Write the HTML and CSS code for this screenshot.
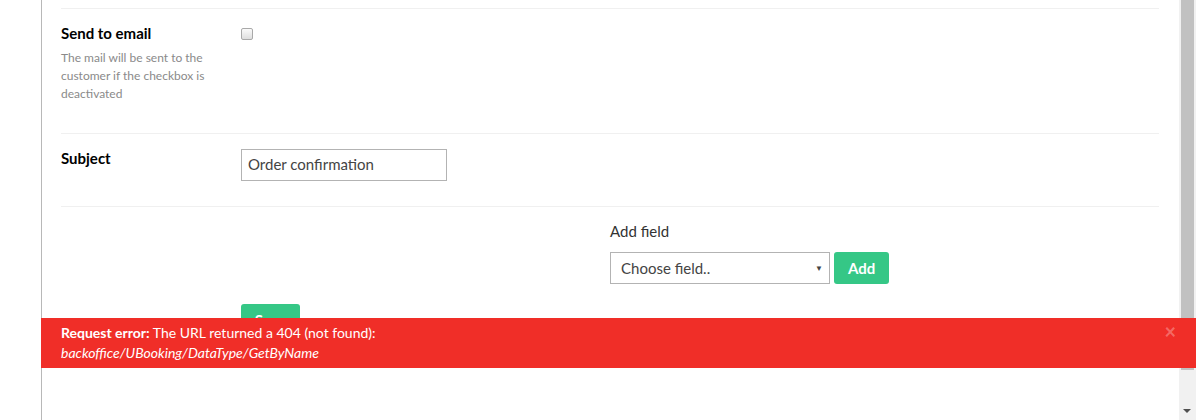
FILE: index.html
```html
<!DOCTYPE html>
<html lang="en">
<head>
    <meta charset="UTF-8">
    <meta name="viewport" content="width=device-width, initial-scale=1.0">
    <title>Email settings</title>
    <link rel="stylesheet" href="styles.css">
</head>
<body>

    <div class="shell">
        <div class="gutter"></div>

        <!-- Editor panel -->
        <div class="editor">
            <div class="prop prop-first">
                <div class="prop-label">
                    <div class="label-title">Send to email</div>
                    <div class="label-desc">The mail will be sent to the customer if the checkbox is deactivated</div>
                </div>
                <div class="prop-control">
                    <input type="checkbox" class="check">
                </div>
            </div>

            <div class="prop">
                <div class="prop-label">
                    <div class="label-title">Subject</div>
                </div>
                <div class="prop-control">
                    <input type="text" class="text-input" value="Order confirmation">
                </div>
            </div>

            <div class="prop prop-last">
                <div class="add-field">
                    <div class="add-title">Add field</div>
                    <div class="add-row">
                        <div class="select">
                            <span>Choose field..</span>
                            <span class="caret">&#9660;</span>
                        </div>
                        <button class="button">Add</button>
                    </div>
                </div>
            </div>

            <div class="actions">
                <button class="button button-save">Save</button>
            </div>
        </div>

        <!-- Fake scrollbar -->
        <div class="scrollbar">
            <div class="thumb"></div>
            <div class="arrow"></div>
        </div>
    </div>

    <!-- Error notification -->
    <div class="notify">
        <div><strong>Request error:</strong> The URL returned a 404 (not found):</div>
        <div><em>backoffice/UBooking/DataType/GetByName</em></div>
        <span class="notify-close">&times;</span>
    </div>

</body>
</html>
```

FILE: styles.css
```css
body {
    margin: 0;
    font-family: Lato, "Open Sans", sans-serif;
    font-size: 14px;
    color: #000;
    background: #fff;
    overflow: hidden;
}
.shell {
    display: flex;
    height: 420px;
}
.gutter {
    width: 41px;
}
.editor {
    flex: 1;
    border-left: 1px solid #b8b8b8;
    padding: 8px 20px 0 19px;
}
.prop {
    display: flex;
    border-top: 1px solid #f0f0f0;
    padding: 14px 0 25px;
}
.prop-first .label-desc {
    margin-bottom: 5px;
}
.prop-label {
    width: 180px;
    flex-shrink: 0;
}
.label-title {
    font-weight: bold;
    font-size: 15px;
    line-height: 20px;
    color: #000;
}
.label-desc {
    font-size: 12px;
    line-height: 18px;
    color: #8a8a8a;
    width: 150px;
    margin-top: 6px;
}
.check {
    appearance: none;
    width: 12px;
    height: 12px;
    margin: 5px 0 0 0;
    border: 1px solid #a9a9a9;
    border-radius: 2px;
    background: linear-gradient(#fafafa, #dedede);
}
.text-input {
    width: 206px;
    height: 32px;
    margin-top: 1px;
    box-sizing: border-box;
    border: 1px solid #b3b3b3;
    padding: 0 6px 2px;
    font-family: Lato, sans-serif;
    font-size: 15px;
    color: #444;
}
.prop-last {
    padding-bottom: 0;
}
.add-field {
    margin-left: 549px;
}
.add-title {
    font-size: 15px;
    line-height: 20px;
    color: #333;
    margin-bottom: 11px;
}
.add-row {
    display: flex;
    gap: 4px;
}
.select {
    width: 220px;
    height: 32px;
    box-sizing: border-box;
    border: 1px solid #b3b3b3;
    padding: 0 6px 0 10px;
    display: flex;
    align-items: center;
    justify-content: space-between;
    font-size: 15px;
    color: #444;
}
.caret {
    font-size: 8px;
    color: #444;
}
.button {
    height: 32px;
    padding: 0 14px;
    background-color: #35c786;
    color: white;
    border: none;
    border-radius: 3px;
    font-family: Lato, sans-serif;
    font-weight: bold;
    font-size: 15px;
    cursor: pointer;
}
.actions {
    margin-top: 20px;
    padding-left: 180px;
}
.button-save {
    width: 59px;
    padding: 0;
}
.scrollbar {
    width: 17px;
    background: #f1f1f1;
    position: relative;
}
.thumb {
    margin-left: 2px;
    width: 13px;
    height: 370px;
    background: #c1c1c1;
}
.arrow {
    position: absolute;
    left: 4px;
    top: 409px;
    border-left: 4px solid transparent;
    border-right: 4px solid transparent;
    border-top: 4px solid #505050;
}
.notify {
    position: absolute;
    left: 41px;
    right: 0;
    top: 318px;
    height: 50px;
    box-sizing: border-box;
    padding: 5px 20px;
    background: #f02e28;
    color: #fff;
    font-size: 14px;
    line-height: 20px;
}
.notify-close {
    position: absolute;
    right: 20px;
    top: 3px;
    font-size: 20px;
    font-weight: bold;
    color: rgba(255, 255, 255, 0.3);
}
```
